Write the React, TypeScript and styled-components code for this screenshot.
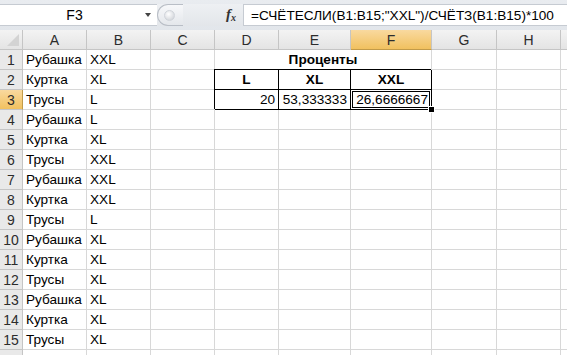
import styled, { createGlobalStyle, css } from "styled-components";

const GlobalStyle = createGlobalStyle`
  html, body {
    margin: 0;
    padding: 0;
    background: #ffffff;
  }
  body {
    font-family: "Liberation Sans", Arial, sans-serif;
    font-size: 14px;
    color: #000;
  }
`;

const COLUMNS = ["A", "B", "C", "D", "E", "F", "G", "H", ""];
const WIDTHS = [23, 64, 64, 64, 64, 72, 81, 65, 64];

const DATA: [string, string][] = [
  ["Рубашка", "XXL"],
  ["Куртка", "XL"],
  ["Трусы", "L"],
  ["Рубашка", "L"],
  ["Куртка", "XL"],
  ["Трусы", "XXL"],
  ["Рубашка", "XXL"],
  ["Куртка", "XXL"],
  ["Трусы", "L"],
  ["Рубашка", "XL"],
  ["Куртка", "XL"],
  ["Трусы", "XL"],
  ["Рубашка", "XL"],
  ["Куртка", "XL"],
  ["Трусы", "XL"],
];

type CellInfo = {
  text?: string;
  align?: "left" | "center" | "right";
  bold?: boolean;
  boxed?: boolean;
  span?: number;
  active?: boolean;
};

// таблица процентов в D1:F3
const summary = (row: number): CellInfo[] | null => {
  if (row === 1) return [{ text: "Проценты", align: "center", bold: true, span: 3 }];
  if (row === 2)
    return [
      { text: "L", align: "center", bold: true, boxed: true },
      { text: "XL", align: "center", bold: true, boxed: true },
      { text: "XXL", align: "center", bold: true, boxed: true },
    ];
  if (row === 3)
    return [
      { text: "20", align: "right", boxed: true },
      { text: "53,333333", align: "right", boxed: true },
      { text: "26,6666667", align: "right", boxed: true, active: true },
    ];
  return null;
};

const App = () => {
  const rows = Array.from({ length: 16 }, (_, i) => i + 1);

  return (
    <Window>
      <GlobalStyle />
      <FormulaBar>
        <NameBox>
          <NameText>F3</NameText>
          <DropArrow />
        </NameBox>
        <FxArea>
          <Grip>
            <GripDot />
          </Grip>
          <FxLabel>
            f<sub>x</sub>
          </FxLabel>
        </FxArea>
        <FormulaInput>=СЧЁТЕСЛИ(B1:B15;"XXL")/СЧЁТЗ(B1:B15)*100</FormulaInput>
      </FormulaBar>

      <Sheet $cols={WIDTHS.map((w) => `${w}px`).join(" ") + " 1fr"}>
        <Corner>
          <CornerMark />
        </Corner>
        {COLUMNS.map((c, i) => (
          <ColHeader key={i} $selected={c === "F"}>
            {c}
          </ColHeader>
        ))}

        {rows.map((r) => {
          const item = DATA[r - 1];
          const extra = summary(r);
          const rest = extra ? extra.reduce((n, e) => n + (e.span ?? 1), 0) : 0;
          return [
            <RowHeader key={`h${r}`} $selected={r === 3}>
              {r <= 15 ? r : ""}
            </RowHeader>,
            <Cell key={`a${r}`}>{item ? item[0] : ""}</Cell>,
            <Cell key={`b${r}`}>{item ? item[1] : ""}</Cell>,
            <Cell key={`c${r}`} />,
            ...(extra
              ? extra.map((e, i) => (
                  <Cell
                    key={`s${r}${i}`}
                    $align={e.align}
                    $bold={e.bold}
                    $boxed={e.boxed}
                    $span={e.span}
                    $active={e.active}
                  >
                    {e.text}
                    {e.active && <FillHandle />}
                  </Cell>
                ))
              : []),
            ...Array.from({ length: 3 - rest }, (_, i) => <Cell key={`e${r}${i}`} />),
            <Cell key={`g${r}`} />,
            <Cell key={`hh${r}`} />,
            <Cell key={`i${r}`} />,
          ];
        })}
      </Sheet>
    </Window>
  );
};

export default App;

//styled-components
const Window = styled.div`
  width: 567px;
  height: 355px;
  overflow: hidden;
  display: flex;
  flex-direction: column;
`;

const FormulaBar = styled.div`
  flex-shrink: 0;
  height: 30px;
  box-sizing: border-box;
  padding: 4px 0 4px 0;
  background: linear-gradient(#e9ecf0, #e2e6eb);
  display: flex;
`;

const NameBox = styled.div`
  width: 157px;
  box-sizing: border-box;
  background: #fff;
  border-top: 1px solid #c6cbd2;
  border-bottom: 1px solid #c6cbd2;
  display: flex;
  align-items: center;
`;

const NameText = styled.div`
  flex: 1;
  text-align: center;
  padding-left: 4px;
  font-size: 14px;
`;

const DropArrow = styled.div`
  width: 0;
  height: 0;
  margin-right: 6px;
  border-left: 3.5px solid transparent;
  border-right: 3.5px solid transparent;
  border-top: 4px solid #444;
`;

const FxArea = styled.div`
  width: 86px;
  display: flex;
  align-items: center;
  justify-content: space-between;
  background: linear-gradient(#eef0f3, #e3e6ea);
`;

const Grip = styled.div`
  width: 26px;
  height: 100%;
  box-sizing: border-box;
  border-radius: 11px 0 0 11px;
  border: 1px solid #b9bec6;
  border-right: none;
  background: linear-gradient(#f7f8fa, #e4e7eb);
  display: flex;
  align-items: center;
  padding-left: 6px;
`;

const GripDot = styled.div`
  width: 9px;
  height: 9px;
  border-radius: 50%;
  background: radial-gradient(circle at 40% 35%, #ffffff, #c8ccd2);
  border: 1px solid #d0d4da;
`;

const FxLabel = styled.div`
  font-family: "Liberation Serif", "Times New Roman", serif;
  font-style: italic;
  font-weight: bold;
  font-size: 15px;
  color: #333;
  margin-right: 7px;
  line-height: 1;

  sub {
    font-size: 10px;
    vertical-align: -2px;
  }
`;

const FormulaInput = styled.div`
  flex: 1;
  box-sizing: border-box;
  background: #fff;
  border: 1px solid #c6cbd2;
  border-right: none;
  padding-left: 7px;
  display: flex;
  align-items: center;
  white-space: nowrap;
  font-size: 13.6px;
`;

const Sheet = styled.div<{ $cols: string }>`
  flex-shrink: 0;
  display: grid;
  grid-template-columns: ${(p) => p.$cols};
  grid-auto-rows: 20px;
  background: #fff;
`;

const headerBase = css`
  box-sizing: border-box;
  border-right: 1px solid #c5c5c5;
  border-bottom: 1px solid #c5c5c5;
  display: flex;
  align-items: center;
  justify-content: center;
  font-size: 14px;
  color: #2c2c2c;
`;

const Corner = styled.div`
  ${headerBase};
  background: linear-gradient(#f3f3f3, #e4e4e4);
  position: relative;
`;

const CornerMark = styled.div`
  position: absolute;
  right: 3px;
  bottom: 3px;
  width: 0;
  height: 0;
  border-left: 12px solid transparent;
  border-bottom: 12px solid #d3d3d3;
`;

const ColHeader = styled.div<{ $selected?: boolean }>`
  ${headerBase};
  background: ${(p) =>
    p.$selected ? "linear-gradient(#f9d99f, #f1c15f)" : "linear-gradient(#f3f3f3, #e4e4e4)"};
  ${(p) => p.$selected && "border-bottom-color: #c29b49;"}
`;

const RowHeader = styled.div<{ $selected?: boolean }>`
  ${headerBase};
  background: ${(p) => (p.$selected ? "linear-gradient(#f9d99f, #f1c15f)" : "#e9e9e9")};
  ${(p) => p.$selected && "border-right-color: #c29b49;"}
`;

const Cell = styled.div<{
  $align?: "left" | "center" | "right";
  $bold?: boolean;
  $boxed?: boolean;
  $span?: number;
  $active?: boolean;
}>`
  position: relative;
  box-sizing: border-box;
  border-right: 1px solid #d8d8d8;
  border-bottom: 1px solid #d8d8d8;
  padding: 0 3px;
  line-height: 20px;
  font-size: 13.6px;
  white-space: nowrap;
  text-align: ${(p) => p.$align ?? "left"};
  font-weight: ${(p) => (p.$bold ? "bold" : "normal")};
  ${(p) => p.$span && `grid-column: span ${p.$span};`}
  ${(p) =>
    p.$boxed &&
    css`
      border-right-color: #000;
      border-bottom-color: #000;
      box-shadow: -1px -1px 0 #000;
    `}
  ${(p) =>
    p.$active &&
    css`
      box-shadow: -1px -1px 0 #000, inset 0 0 0 1px #fff, inset 0 0 0 2px #000;
    `}
`;

const FillHandle = styled.div`
  position: absolute;
  right: -4px;
  bottom: -4px;
  width: 5px;
  height: 5px;
  background: #000;
  border: 1px solid #fff;
  z-index: 1;
`;
